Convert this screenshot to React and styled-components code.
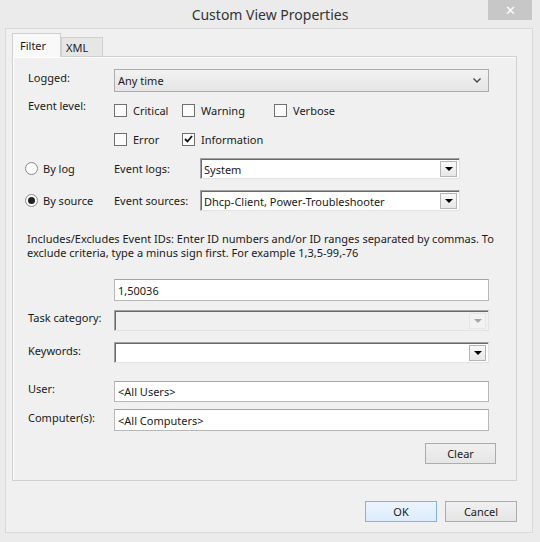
import styled, { createGlobalStyle } from "styled-components";

const GlobalStyle = createGlobalStyle`
  html, body {
    margin: 0;
    padding: 0;
    background: #ebebeb;
  }
  body {
    font-family: "Noto Sans", "Open Sans", sans-serif;
    font-size: 11px;
    color: #1a1a1a;
  }
`;

const Window = styled.div`
  width: 540px;
  height: 542px;
  box-sizing: border-box;
  background: #ebebeb;
  display: flex;
  flex-direction: column;
`;

const TitleBar = styled.div`
  height: 28px;
  display: grid;
  grid-template-columns: 1fr auto 1fr;
  align-items: start;
`;

const Title = styled.div`
  grid-column: 2;
  padding-top: 5px;
  font-size: 14px;
  color: #333;
`;

const CloseButton = styled.div`
  grid-column: 3;
  justify-self: end;
  margin-right: 8px;
  width: 44px;
  height: 20px;
  background: #c7c7c7;
  color: #fff;
  display: flex;
  align-items: center;
  justify-content: center;
  font-size: 13px;
  line-height: 1;
`;

const Client = styled.div`
  flex: 1;
  margin: 0 7px 9px 5px;
  border: 1px solid #dadada;
  background: #f0f0f0;
  padding: 4px 15px 10px 6px;
  display: flex;
  flex-direction: column;
`;

const TabRow = styled.div`
  height: 23px;
  display: flex;
  align-items: flex-end;
`;

const Tab = styled.div`
  box-sizing: border-box;
  height: ${(p) => (p.$active ? "24px" : "19px")};
  width: ${(p) => p.$w}px;
  padding-left: ${(p) => (p.$active ? "7px" : "4px")};
  padding-top: ${(p) => (p.$active ? "4px" : "2px")};
  border: 1px solid #d0d0d0;
  border-bottom: none;
  background: ${(p) => (p.$active ? "#f9f9f9" : "#e6e6e6")};
  margin-bottom: ${(p) => (p.$active ? "-1px" : "0")};
  position: relative;
  z-index: ${(p) => (p.$active ? 1 : 0)};
`;

const Panel = styled.div`
  height: 425px;
  box-sizing: border-box;
  border: 1px solid #d0d0d0;
  box-shadow: inset 1px 1px 0 #fff;
  background: #f0f0f0;
  padding: 12px 20px 0 12px;
  display: flex;
  flex-direction: column;
`;

const Row = styled.div`
  display: flex;
  align-items: ${(p) => p.$align || "flex-start"};
  margin-top: ${(p) => p.$mt || 0}px;
`;

const Label = styled.div`
  width: ${(p) => p.$w || 89}px;
  box-sizing: border-box;
  padding-left: ${(p) => (p.$pl === undefined ? 3 : p.$pl)}px;
  padding-top: ${(p) => p.$pt || 0}px;
  line-height: 16px;
  white-space: nowrap;
`;

const WinSelect = styled.div`
  width: 375px;
  height: 23px;
  box-sizing: border-box;
  border: 1px solid #acacac;
  background: linear-gradient(#f2f2f2, #e5e5e5);
  display: flex;
  align-items: center;
  justify-content: space-between;
  padding: 0 7px 0 3px;
`;

const Combo = styled.div`
  width: ${(p) => p.$w}px;
  height: ${(p) => p.$h || 21}px;
  box-sizing: border-box;
  border-top: 1px solid #a0a0a0;
  border-left: 1px solid #a0a0a0;
  border-right: 1px solid #e3e3e3;
  border-bottom: 1px solid #e3e3e3;
  box-shadow: inset 1px 1px 0 #696969;
  background: ${(p) => (p.$disabled ? "#f0f0f0" : "#fff")};
  display: flex;
  align-items: center;
  justify-content: space-between;
  padding: 1px 2px 0 3px;
`;

const ComboButton = styled.div`
  width: 17px;
  height: 16px;
  box-sizing: border-box;
  border: 1px solid ${(p) => (p.$disabled ? "#e6e6e6" : "#b5b5b5")};
  background: ${(p) => (p.$disabled ? "#f2f2f2" : "linear-gradient(#f8f8f8, #e8e8e8)")};
  display: flex;
  align-items: center;
  justify-content: center;
  &::after {
    content: "";
    border-left: 4px solid transparent;
    border-right: 4px solid transparent;
    border-top: 4px solid ${(p) => (p.$disabled ? "#a8a8a8" : "#000")};
  }
`;

const Input = styled.div`
  width: 375px;
  height: ${(p) => p.$h || 22}px;
  box-sizing: border-box;
  border: 1px solid #b8b8b8;
  border-top-color: #a6a6a6;
  background: #fff;
  display: flex;
  align-items: center;
  padding-left: 3px;
`;

const CheckGrid = styled.div`
  padding-top: 2px;
  display: grid;
  grid-template-columns: 68px 92px auto;
  grid-auto-rows: 20px;
  row-gap: 9px;
`;

const CheckItem = styled.div`
  display: flex;
  align-items: center;
  gap: 6px;
`;

const Box = styled.div`
  width: 13px;
  height: 13px;
  box-sizing: border-box;
  border: 1px solid #707070;
  background: #fbfbfb;
  display: flex;
  align-items: center;
  justify-content: center;
`;

const RadioItem = styled.div`
  width: 89px;
  display: flex;
  align-items: center;
  gap: 5px;
`;

const RadioCircle = styled.div`
  width: 13px;
  height: 13px;
  box-sizing: border-box;
  border-radius: 50%;
  border: 1px solid #8a8a8a;
  background: #fbfbfb;
  display: flex;
  align-items: center;
  justify-content: center;
  &::after {
    content: "";
    display: ${(p) => (p.$on ? "block" : "none")};
    width: 7px;
    height: 7px;
    border-radius: 50%;
    background: #222;
  }
`;

const Description = styled.div`
  margin-top: 21px;
  padding-left: 2px;
  line-height: 14px;
  white-space: nowrap;
`;

const ClearRow = styled.div`
  margin-top: 12px;
  display: flex;
  justify-content: flex-end;
`;

const Button = styled.div`
  width: ${(p) => p.$w || 72}px;
  height: 21px;
  box-sizing: border-box;
  border: 1px solid ${(p) => (p.$default ? "#7eb4ea" : "#acacac")};
  background: ${(p) =>
    p.$default ? "linear-gradient(#ecf4fc, #dcecfc)" : "linear-gradient(#f0f0f0, #e5e5e5)"};
  display: flex;
  align-items: center;
  justify-content: center;
`;

const ButtonRow = styled.div`
  margin-top: 20px;
  display: flex;
  justify-content: flex-end;
  gap: 8px;
`;

const Chevron = () => (
  <svg width="8" height="5" viewBox="0 0 8 5">
    <polyline points="0.5,0.5 4,4 7.5,0.5" fill="none" stroke="#444" strokeWidth="1.3" />
  </svg>
);

const Check = () => (
  <svg width="9" height="8" viewBox="0 0 9 8">
    <polyline points="1,4 3.5,6.5 8,1" fill="none" stroke="#111" strokeWidth="1.8" />
  </svg>
);

const Checkbox = ({ label, checked }) => (
  <CheckItem>
    <Box>{checked && <Check />}</Box>
    {label}
  </CheckItem>
);

const App = () => {
  return (
    <>
      <GlobalStyle />
      <Window>
        <TitleBar>
          <Title>Custom View Properties</Title>
          <CloseButton>✕</CloseButton>
        </TitleBar>
        <Client>
          <TabRow>
            <Tab $active $w={49}>Filter</Tab>
            <Tab $w={42}>XML</Tab>
          </TabRow>
          <Panel>
            <Row>
              <Label $pt={1}>Logged:</Label>
              <WinSelect>
                <span>Any time</span>
                <Chevron />
              </WinSelect>
            </Row>
            <Row $mt={6}>
              <Label>Event level:</Label>
              <CheckGrid>
                <Checkbox label="Critical" />
                <Checkbox label="Warning" />
                <Checkbox label="Verbose" />
                <Checkbox label="Error" />
                <Checkbox label="Information" checked />
              </CheckGrid>
            </Row>
            <Row $mt={9} $align="center">
              <RadioItem>
                <RadioCircle />
                By log
              </RadioItem>
              <Label $w={86} $pl={0}>Event logs:</Label>
              <Combo $w={260}>
                <span>System</span>
                <ComboButton />
              </Combo>
            </Row>
            <Row $mt={11} $align="center">
              <RadioItem>
                <RadioCircle $on />
                By source
              </RadioItem>
              <Label $w={86} $pl={0}>Event sources:</Label>
              <Combo $w={260}>
                <span>Dhcp-Client, Power-Troubleshooter</span>
                <ComboButton />
              </Combo>
            </Row>
            <Description>
              Includes/Excludes Event IDs: Enter ID numbers and/or ID ranges separated by commas. To
              <br />
              exclude criteria, type a minus sign first. For example 1,3,5-99,-76
            </Description>
            <Row $mt={19}>
              <Label />
              <Input>1,50036</Input>
            </Row>
            <Row $mt={9}>
              <Label $pt={0}>Task category:</Label>
              <Combo $w={375} $disabled>
                <span />
                <ComboButton $disabled />
              </Combo>
            </Row>
            <Row $mt={11}>
              <Label $pt={1}>Keywords:</Label>
              <Combo $w={375}>
                <span />
                <ComboButton />
              </Combo>
            </Row>
            <Row $mt={18}>
              <Label>User:</Label>
              <Input $h={21}>&lt;All Users&gt;</Input>
            </Row>
            <Row $mt={7}>
              <Label $pt={1}>Computer(s):</Label>
              <Input>&lt;All Computers&gt;</Input>
            </Row>
            <ClearRow>
              <Button $w={71}>Clear</Button>
            </ClearRow>
          </Panel>
          <ButtonRow>
            <Button $default>OK</Button>
            <Button>Cancel</Button>
          </ButtonRow>
        </Client>
      </Window>
    </>
  );
};

export default App;
